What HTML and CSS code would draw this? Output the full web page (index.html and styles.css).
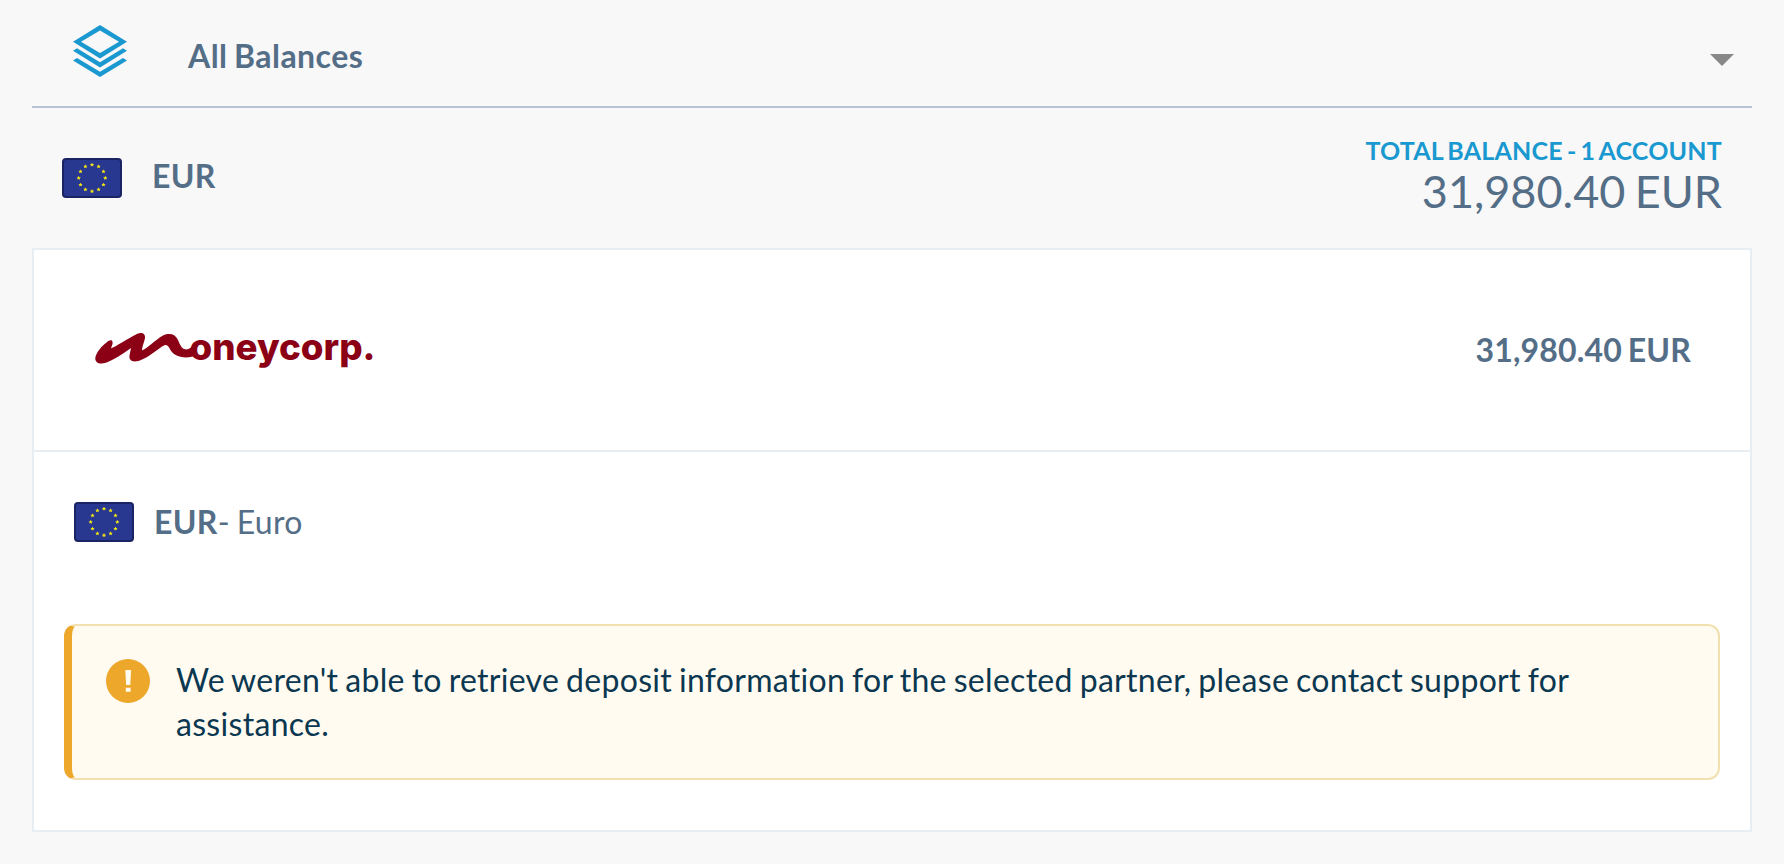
FILE: index.html
```html
<!DOCTYPE html>
<html lang="en">
<head>
    <meta charset="UTF-8">
    <meta name="viewport" content="width=device-width, initial-scale=1.0">
    <title>All Balances</title>
    <link rel="stylesheet" href="styles.css">
</head>
<body>
    <svg class="defs" width="0" height="0">
        <symbol id="star" viewBox="-2 -2 4 4">
            <path d="M0-2 .6-.65 2-.6 .95.3 1.25 1.7 0 .95-1.25 1.7-.95.3-2-.6-.6-.65z"/>
        </symbol>
        <symbol id="flag-eu" viewBox="0 0 60 40">
            <rect width="60" height="40" rx="4" fill="#1a2462"/>
            <rect x="2" y="2" width="56" height="36" rx="2" fill="#283890"/>
            <g fill="#f5e614">
                <use href="#star" x="27.8" y="4.5" width="4.4" height="4.4"/>
                <use href="#star" x="34.4" y="6.3" width="4.4" height="4.4"/>
                <use href="#star" x="39.3" y="11.2" width="4.4" height="4.4"/>
                <use href="#star" x="41.1" y="17.8" width="4.4" height="4.4"/>
                <use href="#star" x="39.3" y="24.4" width="4.4" height="4.4"/>
                <use href="#star" x="34.4" y="29.3" width="4.4" height="4.4"/>
                <use href="#star" x="27.8" y="31.1" width="4.4" height="4.4"/>
                <use href="#star" x="21.2" y="29.3" width="4.4" height="4.4"/>
                <use href="#star" x="16.3" y="24.4" width="4.4" height="4.4"/>
                <use href="#star" x="14.5" y="17.8" width="4.4" height="4.4"/>
                <use href="#star" x="16.3" y="11.2" width="4.4" height="4.4"/>
                <use href="#star" x="21.2" y="6.3" width="4.4" height="4.4"/>
            </g>
        </symbol>
    </svg>

    <main class="container">
        <div class="balance-select">
            <svg class="layers" width="54" height="54" viewBox="0 0 54 54">
                <path fill-rule="evenodd" d="M27 1 54 17.8 27 34.5 0 17.8zM27 6.6 8 17.8 27 29 46 17.8z"/>
                <path d="M0 26.8 4 24.3 27 38.3 50 24.3 54 26.8 27 43.4z"/>
                <path d="M0 36.5 4 34 27 47.8 50 34 54 36.5 27 53z"/>
            </svg>
            <span class="select-label">All Balances</span>
            <span class="caret"></span>
        </div>

        <div class="currency-header">
            <svg class="flag" width="60" height="40"><use href="#flag-eu"/></svg>
            <span class="currency-code">EUR</span>
            <div class="total">
                <div class="total-label">TOTAL BALANCE - 1 ACCOUNT</div>
                <div class="total-amount">31,980.40 EUR</div>
            </div>
        </div>

        <section class="card">
            <div class="partner">
                <svg class="logo" width="280" height="40" viewBox="0 0 280 40">
                    <path d="M11.5 9.500C14 7 17.500 6.500 17.500 9C18 11 17 12 16 15.500C20 14 34 5 41 1.500C46-1.500 50.500 0 50 5C49.500 9 47 13 47 17.500C53 15 60 7 68 2.500C75-.5 80 1.500 82.500 6C84.500 10 85.500 14 89 16C93 17.500 96 15 99 11L102 22C97 24.500 90 25 85.500 23.700C78 22 76 18 74 14.500C72.500 11.500 70.500 11 67 13.500C59 19.500 50 26.500 42 28.300C36 29 34 26.500 34.500 22.500L36 15C29 20 17 28 10 30C4 31.500 0 29.500.3 25C1 20 6.500 13 11.500 9.500z"/>
                    <text class="logo-text" x="94.5" y="26.5" textLength="186" lengthAdjust="spacingAndGlyphs">oneycorp.</text>
                </svg>
                <span class="partner-amount">31,980.40 EUR</span>
            </div>

            <div class="currency-row">
                <svg class="flag" width="60" height="40"><use href="#flag-eu"/></svg>
                <span class="currency-name"><b>EUR</b>- Euro</span>
            </div>

            <div class="alert">
                <svg class="alert-icon" width="44" height="44" viewBox="0 0 44 44">
                    <circle cx="22" cy="22" r="22" fill="#eda82c"/>
                    <path d="M19.3 11h5.8l-.8 15h-4.2zM19.8 28.8h4.8v4h-4.8z" fill="#fffbf0"/>
                </svg>
                <p class="alert-text">We weren't able to retrieve deposit information for the selected partner, please contact support for assistance.</p>
            </div>
        </section>
    </main>
</body>
</html>
```
FILE: styles.css
```css
* {
    box-sizing: border-box;
}

body {
    margin: 0;
    font-family: Lato, "Liberation Sans", sans-serif;
    font-size: 32px;
    line-height: 44px;
    letter-spacing: 0.3px;
    word-spacing: -1.6px;
    color: #546e87;
    background-color: #f8f8f8;
}

svg {
    display: block;
    flex-shrink: 0;
}

.defs {
    display: none;
}

.container {
    padding: 0 32px;
}

.balance-select {
    display: flex;
    align-items: center;
    height: 108px;
    padding: 4px 18px 0 41px;
    border-bottom: 2px solid #b6c4d3;
}

.layers {
    fill: #1a98d0;
    margin-top: -8px;
}

.select-label {
    margin: 2px 0 0 61px;
    font-weight: 700;
    letter-spacing: 0.45px;
}

.caret {
    margin-left: auto;
    margin-top: 10px;
    border: 12px solid transparent;
    border-top-color: #888;
    border-bottom: 0;
}

.currency-header {
    display: flex;
    height: 140px;
    padding: 25px 30px 0;
}

.currency-header .flag {
    margin-top: 25px;
}

.currency-code {
    margin: 21px 0 0 30px;
    font-weight: 700;
}

.total {
    margin-left: auto;
    text-align: right;
}

.total-label {
    font-size: 25px;
    line-height: 34px;
    font-weight: 700;
    letter-spacing: 0.2px;
    word-spacing: -2.2px;
    color: #1a98d0;
}

.total-amount {
    font-size: 45px;
    line-height: 48px;
    letter-spacing: 0;
    word-spacing: -2.2px;
}

.card {
    height: 584px;
    background-color: #fff;
    border: 2px solid #e8edf1;
}

.partner {
    display: flex;
    align-items: center;
    justify-content: space-between;
    height: 202px;
    padding: 0 59px 0 61px;
    border-bottom: 2px solid #e8edf1;
}

.logo {
    margin-top: 6px;
    fill: #8b0015;
    overflow: visible;
}

.logo-text {
    font-family: Inter, sans-serif;
    font-size: 37px;
    font-weight: 800;
    letter-spacing: 0;
}

.partner-amount {
    font-weight: 700;
    letter-spacing: 0.15px;
    word-spacing: -2px;
}

.currency-row {
    display: flex;
    align-items: center;
    height: 140px;
    padding-left: 40px;
}

.currency-name {
    margin-left: 20px;
}

.currency-name b {
    font-weight: 700;
}

.alert {
    display: flex;
    height: 156px;
    margin: 32px 30px 0;
    padding: 32px 80px 0 34px;
    background-color: #fffbf0;
    border: 2px solid #f3e0b0;
    border-left: 8px solid #eda82c;
    border-radius: 12px;
}

.alert-icon {
    margin-top: 1px;
}

.alert-text {
    margin: 0 0 0 26px;
    color: #0b3750;
}
```
